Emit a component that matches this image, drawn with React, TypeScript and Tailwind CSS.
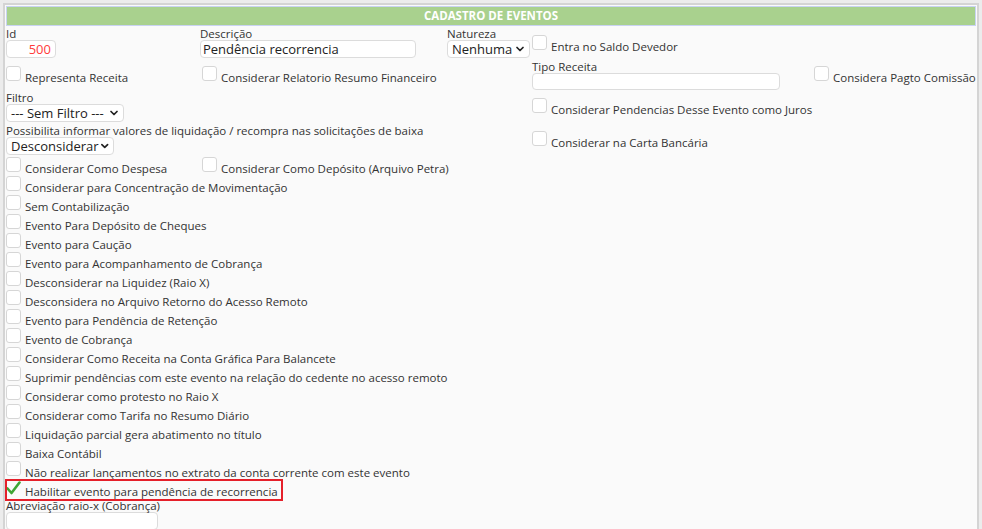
import React from "react";
import { ChevronDown } from "lucide-react";

const font = { fontFamily: '"Open Sans", "Liberation Sans", sans-serif' };

type CheckProps = { label: string; checked?: boolean; className?: string };

const CheckItem: React.FC<CheckProps> = ({ label, checked, className }) => (
  <div className={`flex items-start h-[19px] ${className ?? ""}`}>
    {checked ? (
      <span className="w-[15px] h-[15px] mr-[4px] flex items-center justify-center">
        <svg width="15" height="14" viewBox="0 0 15 14">
          <path
            d="M1.5 7.5 L5.5 12 L13.5 1.5"
            fill="none"
            stroke="#3fa535"
            strokeWidth="2.6"
            strokeLinecap="round"
            strokeLinejoin="round"
          />
        </svg>
      </span>
    ) : (
      <span className="w-[15px] h-[15px] mr-[4px] rounded-[3px] border border-[#d6d6d6] bg-white shrink-0" />
    )}
    <span className="pt-[4px] text-[11.5px] leading-[15px] text-[#333] whitespace-nowrap">
      {label}
    </span>
  </div>
);

const Select: React.FC<{ value: string; className?: string }> = ({ value, className }) => (
  <div
    className={`h-[18px] flex items-center justify-between pl-[4px] pr-[3px] bg-white border border-[#dcdcdc] rounded-[4px] text-[13px] text-[#222] ${className ?? ""}`}
  >
    <span className="leading-[16px] whitespace-nowrap">{value}</span>
    <ChevronDown size={12} strokeWidth={3.5} className="text-[#222]" />
  </div>
);

const Label: React.FC<{ children: React.ReactNode }> = ({ children }) => (
  <div className="text-[11.5px] leading-[13px] text-[#333] whitespace-nowrap">{children}</div>
);

const listItems = [
  "Considerar para Concentração de Movimentação",
  "Sem Contabilização",
  "Evento Para Depósito de Cheques",
  "Evento para Caução",
  "Evento para Acompanhamento de Cobrança",
  "Desconsiderar na Liquidez (Raio X)",
  "Desconsidera no Arquivo Retorno do Acesso Remoto",
  "Evento para Pendência de Retenção",
  "Evento de Cobrança",
  "Considerar Como Receita na Conta Gráfica Para Balancete",
  "Suprimir pendências com este evento na relação do cedente no acesso remoto",
  "Considerar como protesto no Raio X",
  "Considerar como Tarifa no Resumo Diário",
  "Liquidação parcial gera abatimento no título",
  "Baixa Contábil",
  "Não realizar lançamentos no extrato da conta corrente com este evento",
];

export default function App() {
  return (
    <div className="w-[982px] h-[529px] bg-[#ececec] pt-[3px] pl-[3px] overflow-hidden" style={font}>
      <div className="w-[976px] h-[540px] bg-[#fafafa] border-l-2 border-t-2 border-r-2 border-[#d4d4d4] pt-[1px] pl-[1px]">
        {/* Header */}
        <div className="w-[970px] h-[20px] bg-[#a9d18e] border border-[#c9d3f2] flex items-center justify-center text-white text-[11.5px] font-bold">
          CADASTRO DE EVENTOS
        </div>

        {/* Top section */}
        <div className="flex mt-[1px]">
          {/* left column */}
          <div className="w-[526px]">
            <div className="flex">
              <div className="w-[194px]">
                <Label>Id</Label>
                <div className="w-[50px] h-[18px] bg-white border border-[#dcdcdc] rounded-[4px] text-right pr-[4px] text-[13px] leading-[16px] text-[#ff3b3b]">
                  500
                </div>
              </div>
              <div className="w-[247px]">
                <Label>Descrição</Label>
                <div className="w-[216px] h-[18px] bg-white border border-[#dcdcdc] rounded-[4px] pl-[2px] text-[13px] leading-[16px] text-[#222]">
                  Pendência recorrencia
                </div>
              </div>
              <div>
                <Label>Natureza</Label>
                <Select value="Nenhuma" className="w-[83px]" />
              </div>
            </div>
            <div className="flex mt-[8px]">
              <CheckItem label="Representa Receita" className="w-[196px]" />
              <CheckItem label="Considerar Relatorio Resumo Financeiro" />
            </div>
            <div className="mt-[6px]">
              <Label>Filtro</Label>
              <Select value="--- Sem Filtro ---" className="w-[118px]" />
            </div>
            <div className="mt-[2px]">
              <Label>Possibilita informar valores de liquidação / recompra nas solicitações de baixa</Label>
              <Select value="Desconsiderar" className="w-[108px]" />
            </div>
          </div>
          {/* right column */}
          <div className="flex-1 pt-[8px]">
            <CheckItem label="Entra no Saldo Devedor" />
            <div className="flex mt-[6px]">
              <div className="w-[282px]">
                <Label>Tipo Receita</Label>
                <div className="w-[248px] h-[17px] bg-white border border-[#dcdcdc] rounded-[4px]" />
              </div>
              <CheckItem label="Considera Pagto Comissão" className="mt-[6px]" />
            </div>
            <CheckItem label="Considerar Pendencias Desse Evento como Juros" className="mt-[8px]" />
            <CheckItem label="Considerar na Carta Bancária" className="mt-[14px]" />
          </div>
        </div>

        {/* Checkbox list */}
        <div className="mt-[2px]">
          <div className="flex">
            <CheckItem label="Considerar Como Despesa" className="w-[196px]" />
            <CheckItem label="Considerar Como Depósito (Arquivo Petra)" />
          </div>
          {listItems.map((l) => (
            <CheckItem key={l} label={l} />
          ))}
          <div className="relative">
            <CheckItem label="Habilitar evento para pendência de recorrencia" checked />
            <div className="absolute -top-[1px] -left-[1px] w-[278px] h-[22px] border-2 border-[#e5202a]" />
          </div>
          <div>
            <Label>Abreviação raio-x (Cobrança)</Label>
            <div className="w-[152px] h-[18px] bg-white border border-[#dcdcdc] rounded-[4px]" />
          </div>
        </div>
      </div>
    </div>
  );
}
